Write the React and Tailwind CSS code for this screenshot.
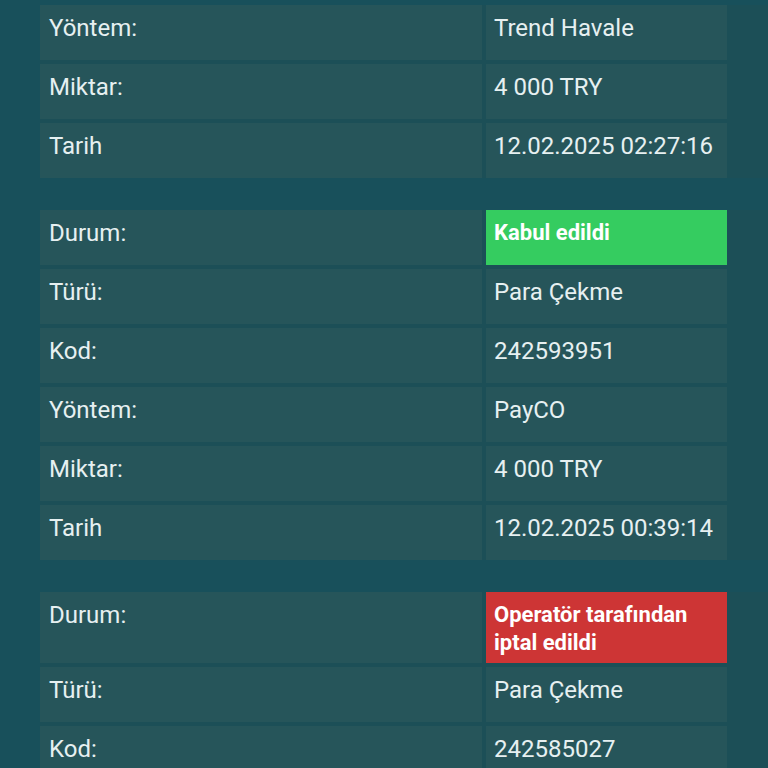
const tables = [
  {
    rows: [
      ['Yöntem:', 'Trend Havale'],
      ['Miktar:', '4 000 TRY'],
      ['Tarih', '12.02.2025 02:27:16'],
    ],
  },
  {
    status: { text: 'Kabul edildi', tone: 'ok' },
    rows: [
      ['Türü:', 'Para Çekme'],
      ['Kod:', '242593951'],
      ['Yöntem:', 'PayCO'],
      ['Miktar:', '4 000 TRY'],
      ['Tarih', '12.02.2025 00:39:14'],
    ],
  },
  {
    status: { text: 'Operatör tarafından iptal edildi', tone: 'fail' },
    rows: [
      ['Türü:', 'Para Çekme'],
      ['Kod:', '242585027'],
    ],
  },
];

const cell = 'min-h-[55px] pt-[9px] pb-[6px] px-[9px] leading-[28px]';

function Table({ status, rows }) {
  return (
    <div className="grid grid-cols-[442px_241px] gap-x-[4px] gap-y-[4px] bg-[#1c4f57]">
      {status && (
        <>
          <div className={`${cell} bg-[#26555a]`}>Durum:</div>
          <div
            className={`${cell} pl-[8px] text-[22px] font-bold text-white ${
              status.tone === 'ok' ? 'bg-[#35cc60]' : 'bg-[#cd3535]'
            }`}
          >
            {status.text}
          </div>
        </>
      )}
      {rows.map(([k, v]) => (
        <div key={k} className="contents">
          <div className={`${cell} bg-[#26555a]`}>{k}</div>
          <div className={`${cell} pl-[8px] bg-[#26555a]`}>{v}</div>
        </div>
      ))}
    </div>
  );
}

export default function App() {
  return (
    <div
      className="h-[768px] overflow-hidden bg-[#18505b] text-[#e6f0f1] text-[24px] pt-[5px] pl-[40px]"
      style={{ fontFamily: 'Roboto, "Noto Sans", sans-serif' }}
    >
      <div className="flex flex-col gap-[32px]">
        {tables.map((t, i) => (
          <Table key={i} {...t} />
        ))}
      </div>
    </div>
  );
}
